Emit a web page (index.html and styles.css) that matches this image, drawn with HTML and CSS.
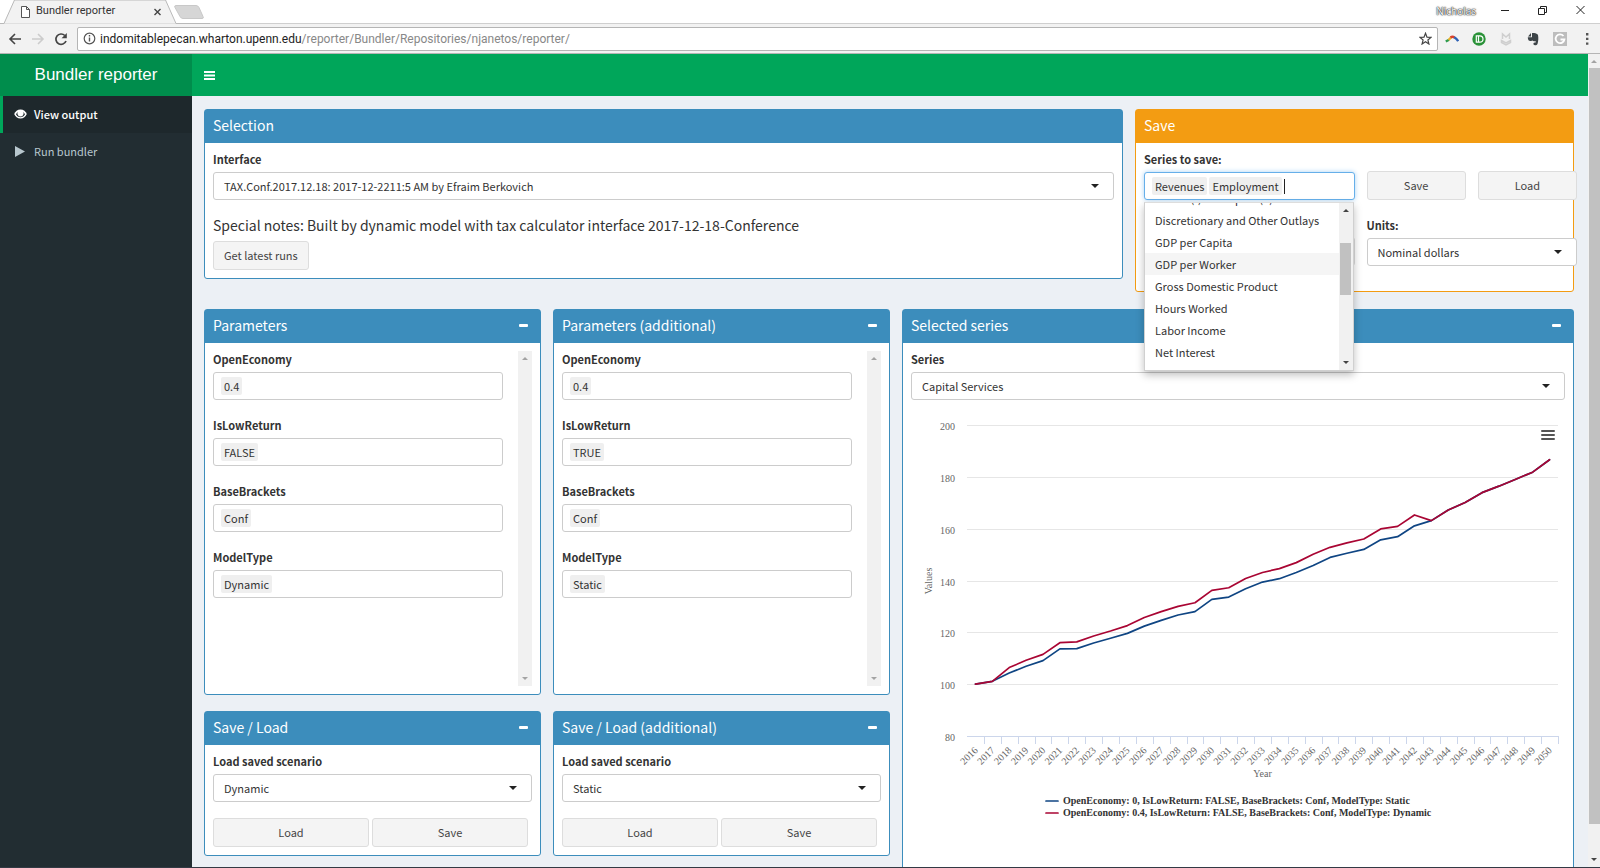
FILE: index.html
```html
<!DOCTYPE html>
<html lang="en">
<head>
<meta charset="utf-8">
<title>Bundler reporter</title>
<link rel="stylesheet" href="styles.css">
</head>
<body>
<div class="window">
  <div class="tabstrip">
    <svg class="tab-shape" width="210" height="24" viewBox="0 0 210 24" aria-hidden="true">
      <path d="M0 23.5H4L14.500 0H165.500L176 23.500H210" fill="#f2f2f2" stroke="#b9b9b9"/>
      <path d="M176 5.500h20q2 0 3 2l4 9q1 2-1 2h-19q-2 0-3-2l-5-9q-1-2 1-2z" fill="#d6d6d6" stroke="#c8c8c8"/>
      <path d="M21.500 6.500h5l3 3v8h-8zM26.500 6.500v3h3" fill="#fff" stroke="#555"/>
      <path d="M154.500 9l6 6m0-6l-6 6" stroke="#444" stroke-width="1.400"/>
    </svg>
    <span class="tab-title">Bundler reporter</span>
    <span class="profile">Nicholas</span>
    <svg class="win-icons" width="100" height="22" viewBox="0 0 100 22" fill="none" stroke="#222" aria-hidden="true">
      <path d="M1 10.500h8M38.500 8.500h6v6h-6zM40.500 8.500v-2h6v6h-2M76.500 6l8 8m0-8l-8 8"/>
    </svg>
  </div>
  <div class="toolbar">
    <div class="nav-buttons">
      <button class="icon-btn" aria-label="Back"><svg width="14" height="14" viewBox="0 0 14 14" fill="none" stroke="#444" stroke-width="1.600"><path d="M13 7H2M7 2L2 7l5 5"/></svg></button>
      <button class="icon-btn" aria-label="Forward"><svg width="14" height="14" viewBox="0 0 14 14" fill="none" stroke="#ccc" stroke-width="1.600"><path d="M1 7h11M7 2l5 5-5 5"/></svg></button>
      <button class="icon-btn" aria-label="Reload"><svg width="14" height="14" viewBox="0 0 14 14" fill="none" stroke="#444" stroke-width="1.700"><path d="M12 9A5.200 5.200 0 1 1 10.800 3.500"/><path d="M12.800 1v5.200H7.600z" fill="#444" stroke="none"/></svg></button>
    </div>
    <div class="omnibox">
      <svg width="13" height="13" viewBox="0 0 13 13" fill="none" stroke="#555" aria-hidden="true"><circle cx="6.500" cy="6.500" r="5.300" stroke-width="1.200"/><path d="M6.500 5.500v4M6.500 3v1.400" stroke-width="1.400"/></svg>
      <span class="url">indomitablepecan.wharton.upenn.edu<span class="url-path">/reporter/Bundler/Repositories/njanetos/reporter/</span></span>
      <svg width="13" height="13" viewBox="0 0 13 13" fill="none" stroke="#444" stroke-width="1.200" aria-hidden="true"><path d="M6.500 1.300l1.500 3.800 4 .3-3.100 2.600 1 4-3.400-2.200-3.400 2.200 1-4L1 5.400l4-.3z"/></svg>
    </div>
    <div class="extensions">
      <svg width="14" height="14" viewBox="0 0 14 14" fill="none" stroke-width="2.400"><path d="M.8 9.500L4 7.700" stroke="#2e9b4f"/><path d="M3.500 8L6 5.500" stroke="#e8b02c"/><path d="M5.500 5.500Q7.500 4 9.500 5.500" stroke="#d8402c"/><path d="M9.200 5.200q2.500 1.500 4 4" stroke="#2f62b5"/></svg>
      <svg width="14" height="14" viewBox="0 0 14 14"><circle cx="7" cy="7" r="6.700" fill="#2a9238"/><path d="M4.300 3.800h3.500a3.200 3.200 0 0 1 0 6.400H4.300zM6.500 4v6" fill="none" stroke="#fff" stroke-width="1.200"/></svg>
      <svg width="12" height="14" viewBox="0 0 12 14" fill="none" stroke="#cfcfcf" stroke-width="1.500"><path d="M2.500 7V2L6 5l3.500-3v5M1.500 8.500v2L6 13l4.500-2.500v-2L6 11z"/></svg>
      <svg width="12" height="14" viewBox="0 0 12 14" fill="#3d4448"><path d="M4 1L1 4.500h3zM5 1h2c2 .5 3.500.8 4 2 .6 3 .4 6-.5 9-.4 1-1.200 1.300-2.400 1.300-1.600 0-2-1-1.500-2.200.4-.8 1.500-.8 2-.4V9C7 9.400 6 9.300 5.600 8.600 5 9.300 2 9.200 1.400 8 .9 7 .8 6 .8 5.300H5z"/></svg>
      <svg width="14" height="14" viewBox="0 0 14 14"><path d="M0 0h14v14H0z" fill="#bdbdbd"/><path d="M10.500 4A4.400 4.400 0 1 0 11.400 7.500H7.500" fill="none" stroke="#fff" stroke-width="1.800"/></svg>
      <svg width="4" height="12" viewBox="0 0 4 12" fill="#555"><path d="M1 0h2.400v2.400H1zM1 4.700h2.400v2.400H1zM1 9.400h2.400v2.400H1z"/></svg>
    </div>
  </div>

  <div class="page">
    <div class="app">
      <header class="brand">Bundler reporter</header>
      <nav class="topnav">
        <button class="menu-toggle" aria-label="Toggle navigation"><svg width="11" height="9" viewBox="0 0 11 9" fill="#fff"><path d="M0 0h11v2H0zM0 3.500h11v2H0zM0 7h11v2H0z"/></svg></button>
      </nav>
      <aside class="sidebar">
        <a class="side-link active" href="#output"><svg width="13" height="10" viewBox="0 0 13 10"><path d="M6.500.5C3.500.5 1.300 2.600.2 5c1.100 2.400 3.300 4.500 6.300 4.500s5.200-2.100 6.300-4.500C11.700 2.600 9.500.5 6.500.5z" fill="#fff"/><path d="M2 5.200C3 7 4.600 8.200 6.500 8.200S10 7 11 5.200C10.500 4.200 9.800 3.500 9.200 3a3.100 3.100 0 1 1-5.400 0C3.200 3.500 2.500 4.200 2 5.200z" fill="#1e282c"/></svg>View output</a>
        <a class="side-link" href="#bundler"><svg width="13" height="11" viewBox="0 0 13 11" fill="#b8c7ce"><path d="M1 0l10 5.500L1 11z"/></svg>Run bundler</a>
      </aside>

      <main class="content">
        <div class="row row-top">
          <section class="box">
            <h3 class="box-title">Selection</h3>
            <div class="box-body">
              <label for="interface">Interface</label>
              <div class="select"><select id="interface"><option>TAX.Conf.2017.12.18: 2017-12-2211:5 AM by Efraim Berkovich</option></select></div>
              <p class="notes">Special notes: Built by dynamic model with tax calculator interface 2017-12-18-Conference</p>
              <button class="btn">Get latest runs</button>
            </div>
          </section>

          <section class="box warning">
            <h3 class="box-title">Save</h3>
            <div class="box-body save-grid">
              <div class="series-field">
                <label for="series-save">Series to save:</label>
                <div class="chips focus"><span class="chip">Revenues</span><span class="chip">Employment</span><span class="caret"></span><input id="series-save" type="text"></div>
                <div class="dropdown">
                  <ul class="options">
                    <li>Deficit (-) or Surplus (+)</li>
                    <li>Discretionary and Other Outlays</li>
                    <li>GDP per Capita</li>
                    <li class="hover">GDP per Worker</li>
                    <li>Gross Domestic Product</li>
                    <li>Hours Worked</li>
                    <li>Labor Income</li>
                    <li>Net Interest</li>
                  </ul>
                  <div class="scroll dark"><i class="up"></i><i class="thumb"></i><i class="down"></i></div>
                </div>
              </div>
              <div class="save-buttons"><button class="btn">Save</button><button class="btn">Load</button></div>
              <button class="btn under" aria-label="Download"></button>
              <div>
                <label for="units">Units:</label>
                <div class="select"><select id="units"><option>Nominal dollars</option></select></div>
              </div>
            </div>
          </section>
        </div>

        <div class="row row-main">
          <div class="stack">
            <section class="box">
              <h3 class="box-title">Parameters<button class="collapse" aria-label="Collapse"></button></h3>
              <div class="box-body params">
                <div class="fields">
                  <div><label for="a1">OpenEconomy</label><div class="chips"><span class="chip">0.4</span><input id="a1" type="text"></div></div>
                  <div><label for="a2">IsLowReturn</label><div class="chips"><span class="chip">FALSE</span><input id="a2" type="text"></div></div>
                  <div><label for="a3">BaseBrackets</label><div class="chips"><span class="chip">Conf</span><input id="a3" type="text"></div></div>
                  <div><label for="a4">ModelType</label><div class="chips"><span class="chip">Dynamic</span><input id="a4" type="text"></div></div>
                </div>
                <div class="scroll"><i class="up"></i><i class="down"></i></div>
              </div>
            </section>
            <section class="box">
              <h3 class="box-title">Save / Load<button class="collapse" aria-label="Collapse"></button></h3>
              <div class="box-body">
                <label for="s1">Load saved scenario</label>
                <div class="select"><select id="s1"><option>Dynamic</option></select></div>
                <div class="pair"><button class="btn">Load</button><button class="btn">Save</button></div>
              </div>
            </section>
          </div>

          <div class="stack">
            <section class="box">
              <h3 class="box-title">Parameters (additional)<button class="collapse" aria-label="Collapse"></button></h3>
              <div class="box-body params">
                <div class="fields">
                  <div><label for="b1">OpenEconomy</label><div class="chips"><span class="chip">0.4</span><input id="b1" type="text"></div></div>
                  <div><label for="b2">IsLowReturn</label><div class="chips"><span class="chip">TRUE</span><input id="b2" type="text"></div></div>
                  <div><label for="b3">BaseBrackets</label><div class="chips"><span class="chip">Conf</span><input id="b3" type="text"></div></div>
                  <div><label for="b4">ModelType</label><div class="chips"><span class="chip">Static</span><input id="b4" type="text"></div></div>
                </div>
                <div class="scroll"><i class="up"></i><i class="down"></i></div>
              </div>
            </section>
            <section class="box">
              <h3 class="box-title">Save / Load (additional)<button class="collapse" aria-label="Collapse"></button></h3>
              <div class="box-body">
                <label for="s2">Load saved scenario</label>
                <div class="select"><select id="s2"><option>Static</option></select></div>
                <div class="pair"><button class="btn">Load</button><button class="btn">Save</button></div>
              </div>
            </section>
          </div>

          <section class="box">
            <h3 class="box-title">Selected series<button class="collapse" aria-label="Collapse"></button></h3>
            <div class="box-body">
              <label for="series">Series</label>
              <div class="select"><select id="series"><option>Capital Services</option></select></div>
              <svg class="chart" id="chart" viewBox="0 0 654 480" role="img" aria-label="Values by year"></svg>
            </div>
          </section>
        </div>
      </main>
    </div>
    <div class="scroll page-scroll dark"><i class="up"></i><i class="thumb"></i><i class="down"></i></div>
  </div>
  <div class="taskbar"></div>
</div>
<script src="chart.js"></script>
</body>
</html>
```

FILE: styles.css
```css
* { box-sizing: border-box; }

body {
  margin: 0;
  font: 11px/17px "Noto Sans CJK SC", "Open Sans", sans-serif;
  color: #333;
}

button, input, select { font: inherit; color: inherit; }
button { padding: 0; cursor: pointer; }

.window {
  display: flex;
  flex-direction: column;
  height: 100vh;
  overflow: hidden;
}

/* Browser chrome */
.tabstrip {
  position: relative;
  display: flex;
  height: 24px;
  background: linear-gradient(#fff 23px, #cfcfcf 23px);
  font: 11px/22px Roboto, sans-serif;
}
.tab-shape { position: absolute; left: 0; top: 0; }
.tab-title { position: relative; padding-left: 36px; flex: 1; color: #333; }
.profile {
  padding-right: 24px;
  font: 10px/22px "Open Sans", sans-serif;
  color: #fff;
  text-shadow: 0 0 1px #222, 0 0 1px #222, 0 0 2px #444;
}
.toolbar {
  display: flex;
  align-items: center;
  height: 30px;
  background: #f2f2f2;
  border-bottom: 1px solid #b5b5b5;
}
.nav-buttons {
  display: grid;
  grid-template-columns: repeat(3, 23px);
  padding: 0 5px 0 3px;
}
.icon-btn { display: grid; place-items: center; border: 0; background: none; }
.omnibox {
  flex: 1;
  display: flex;
  align-items: center;
  gap: 4px;
  height: 24px;
  padding: 0 5px;
  background: #fff;
  border: 1px solid #b5b5b5;
  border-radius: 2px;
  font: 12px/20px Roboto, sans-serif;
  color: #222;
}
.url { flex: 1; }
.url-path { color: #888; }
.extensions {
  display: grid;
  grid-template-columns: repeat(6, 27px);
  place-items: center;
}

/* Page frame */
.page { flex: 1; display: flex; min-height: 0; }
.app {
  flex: 1;
  display: grid;
  grid-template-columns: 192px 1fr;
  grid-template-rows: 42px 1fr;
  min-height: 0;
  background: #ecf0f5;
}
.brand {
  background: #008d4c;
  color: #fff;
  text-align: center;
  font: 17px/42px "Liberation Sans", sans-serif;
}
.topnav { display: flex; align-items: center; padding: 0 12px; background: #00a65a; }
.menu-toggle { border: 0; background: none; line-height: 9px; }
.sidebar { background: #222d32; }
.side-link {
  display: flex;
  align-items: center;
  gap: 7px;
  height: 37px;
  padding: 0 0 1px 11px;
  border-left: 3px solid transparent;
  color: #b8c7ce;
  text-decoration: none;
}
.side-link.active {
  background: #1e282c;
  border-color: #00a65a;
  color: #fff;
  font-weight: 500;
}
.taskbar { height: 1px; background: #333a44; }

.content {
  display: flex;
  flex-direction: column;
  gap: 17px;
  min-height: 0;
  padding: 13px 14px 0 12px;
  overflow: hidden;
}
.row { display: grid; gap: 12px; align-items: start; }
.row-top { grid-template-columns: 919fr 439fr; }
.row-main { grid-template-columns: 337fr 337fr 672fr; }
.stack { display: flex; flex-direction: column; gap: 16px; }

/* Boxes */
.box {
  min-width: 0;
  background: #fff;
  border: 1px solid #3c8dbc;
  border-radius: 3px;
}
.box-title {
  display: flex;
  justify-content: space-between;
  align-items: center;
  height: 33px;
  margin: 0;
  padding: 0 8px 3px;
  background: #3c8dbc;
  color: #fff;
  font-size: 14px;
  font-weight: 400;
  line-height: 20px;
}
.box.warning { border-color: #f39c12; }
.warning .box-title { background: #f39c12; }
.box-body { padding: 8px; }
.collapse {
  width: 9px;
  height: 3px;
  margin-right: 4px;
  border: 0;
  border-radius: 1px;
  background: #fff;
}

/* Form controls */
label { display: block; margin-bottom: 4px; font-weight: 700; }
.select { position: relative; }
.select select {
  display: block;
  width: 100%;
  height: 28px;
  padding: 0 28px 0 10px;
  appearance: none;
  background: #fff;
  border: 1px solid #ccc;
  border-radius: 3px;
}
.select::after {
  content: "";
  position: absolute;
  right: 15px;
  top: 12px;
  border: 4px solid transparent;
  border-top-color: #222;
  border-bottom: 0;
}
.btn {
  height: 29px;
  padding: 0 10px;
  background: #f4f4f4;
  border: 1px solid #ddd;
  border-radius: 3px;
  color: #444;
}
.notes { margin: 13px 0 4px; font-size: 14px; line-height: 24px; }
.chips {
  display: flex;
  align-items: center;
  gap: 2px;
  height: 28px;
  padding: 0 7px;
  background: #fff;
  border: 1px solid #ccc;
  border-radius: 3px;
}
.chips.focus { border-color: #66afe9; box-shadow: 0 0 5px #a8d2f5; }
.chip { padding: 0 3px; background: #efefef; border-radius: 2px; line-height: 18px; }
.chips input {
  flex: 1;
  min-width: 0;
  width: 0;
  height: 20px;
  padding: 0;
  border: 0;
  outline: 0;
  background: none;
}
.caret { width: 1px; height: 15px; background: #222; }

.save-grid {
  display: grid;
  grid-template-columns: 1fr 1fr;
  gap: 9px 12px;
  margin-right: -12px;
  padding-bottom: 25px;
}
.save-buttons {
  display: grid;
  grid-template-columns: 1fr 1fr;
  gap: 12px;
  align-self: end;
}
.save-grid > div:last-child { padding-top: 8px; }
.under { align-self: end; }
.series-field { position: relative; }
.dropdown {
  position: absolute;
  z-index: 2;
  top: 51px;
  left: 0;
  right: 1px;
  display: flex;
  height: 169px;
  background: #fff;
  border: 1px solid #d0d0d0;
  border-top-color: #ddd;
  box-shadow: 0 4px 8px rgba(0, 0, 0, 0.25);
  overflow: hidden;
}
.options { flex: 1; margin: -16px 0 0; padding: 0; list-style: none; line-height: 22px; }
.options li { padding-left: 10px; white-space: nowrap; }
.options .hover { background: #f5f5f5; }

.params { display: flex; justify-content: space-between; height: 351px; }
.fields { display: grid; gap: 17px; align-content: start; flex: 1; margin-right: 15px; }
.pair {
  display: grid;
  grid-template-columns: 1fr 1fr;
  gap: 3px;
  margin: 16px 4px 0 0;
}

/* Drawn scroll bars */
.scroll {
  flex: none;
  display: flex;
  flex-direction: column;
  align-items: center;
  width: 14px;
  padding: 6px 0;
  background: #f1f1f1;
}
.up, .down { border: 3px solid transparent; }
.up { border-top: 0; border-bottom-color: #a3a3a3; }
.down { border-bottom: 0; border-top-color: #a3a3a3; margin-top: auto; }
.dark .down { border-top-color: #444; }
.dropdown .up { border-bottom-color: #444; }
.thumb { width: 11px; background: #c1c1c1; }
.dropdown .thumb { height: 52px; margin-top: 31px; }
.page-scroll { width: 12px; }
.page-scroll .thumb { flex: 1; margin: 5px 0 34px; }

/* Chart */
.chart {
  display: block;
  width: 100%;
  height: auto;
  margin-top: 5px;
  font-family: "Liberation Serif", serif;
  font-size: 10px;
  fill: #666;
}
.grid-line { stroke: #e6e6e6; }
.axis-line { stroke: #ccd6eb; }
.series-line { fill: none; stroke-width: 1.7; stroke-linejoin: round; stroke-linecap: round; }
.axis-title { text-anchor: middle; }
.tick-label { text-anchor: end; }
.legend { font-weight: 700; fill: #333; }
.menu-bars { stroke: #555; stroke-width: 2; stroke-linecap: round; }
```

FILE: chart.js
```js
const series = [
  { name: 'OpenEconomy: 0, IsLowReturn: FALSE, BaseBrackets: Conf, ModelType: Static', color: '#0f4583',
    data: [100, 101.1, 104.3, 106.9, 109.1, 113.6, 113.7, 115.9, 117.7, 119.6, 122.4, 124.6, 126.7, 128, 132.7, 133.6, 136.8, 139.4, 140.7, 143.1, 145.8, 148.9, 150.5, 152, 155.7, 156.9, 161.1, 163.1, 167.2, 170.1, 173.9, 176.4, 179.1, 181.8, 186.6] },
  { name: 'OpenEconomy: 0.4, IsLowReturn: FALSE, BaseBrackets: Conf, ModelType: Dynamic', color: '#a90533',
    data: [100, 101.1, 106.4, 109.2, 111.5, 116, 116.3, 118.6, 120.5, 122.6, 125.7, 128, 130, 131.4, 136.2, 137.2, 140.8, 143.1, 144.6, 146.9, 150.1, 152.8, 154.5, 156, 159.9, 160.9, 165.3, 163.1, 167.2, 170.1, 173.9, 176.4, 179.1, 181.8, 186.6] }
];

const chart = document.getElementById('chart');
const left = 56, right = 647, top0 = 20, bottom = 331;
const step = (right - left) / 35;
const yOf = v => bottom - (v - 80) / 120 * (bottom - top0);
const xOf = i => left + step * (i + 0.5);

function add(tag, attrs, text) {
  const el = document.createElementNS('http://www.w3.org/2000/svg', tag);
  for (const key in attrs) el.setAttribute(key, attrs[key]);
  if (text) el.textContent = text;
  chart.appendChild(el);
}

for (let v = 80; v <= 200; v += 20) {
  const y = Math.round(yOf(v)) + 0.5;
  add('path', { d: `M${left} ${y}H${right}`, class: v === 80 ? 'axis-line' : 'grid-line' });
  add('text', { x: left - 12, y: y + 4, class: 'tick-label' }, String(v));
}
for (let i = 0; i < 35; i++) {
  const tick = Math.round(left + step * (i + 1)) + 0.5;
  add('path', { d: `M${tick} ${bottom}v8`, class: 'axis-line' });
  const x = xOf(i) + 3, y = bottom + 15;
  add('text', { x, y, transform: `rotate(-45 ${x} ${y})`, class: 'tick-label' }, String(2016 + i));
}
add('text', { x: (left + right) / 2, y: 372, class: 'axis-title' }, 'Year');
add('text', { x: 21, y: 176, transform: 'rotate(-90 21 176)', class: 'axis-title' }, 'Values');
series.forEach((s, n) => {
  add('polyline', { points: s.data.map((v, i) => `${xOf(i)},${yOf(v)}`).join(' '), class: 'series-line', stroke: s.color });
  const y = 396 + n * 12;
  add('path', { d: `M135 ${y}h12`, class: 'series-line', stroke: s.color });
  add('text', { x: 152, y: y + 3, class: 'legend' }, s.name);
});
add('path', { d: 'M631 26h12M631 30h12M631 34h12', class: 'menu-bars' });
```
